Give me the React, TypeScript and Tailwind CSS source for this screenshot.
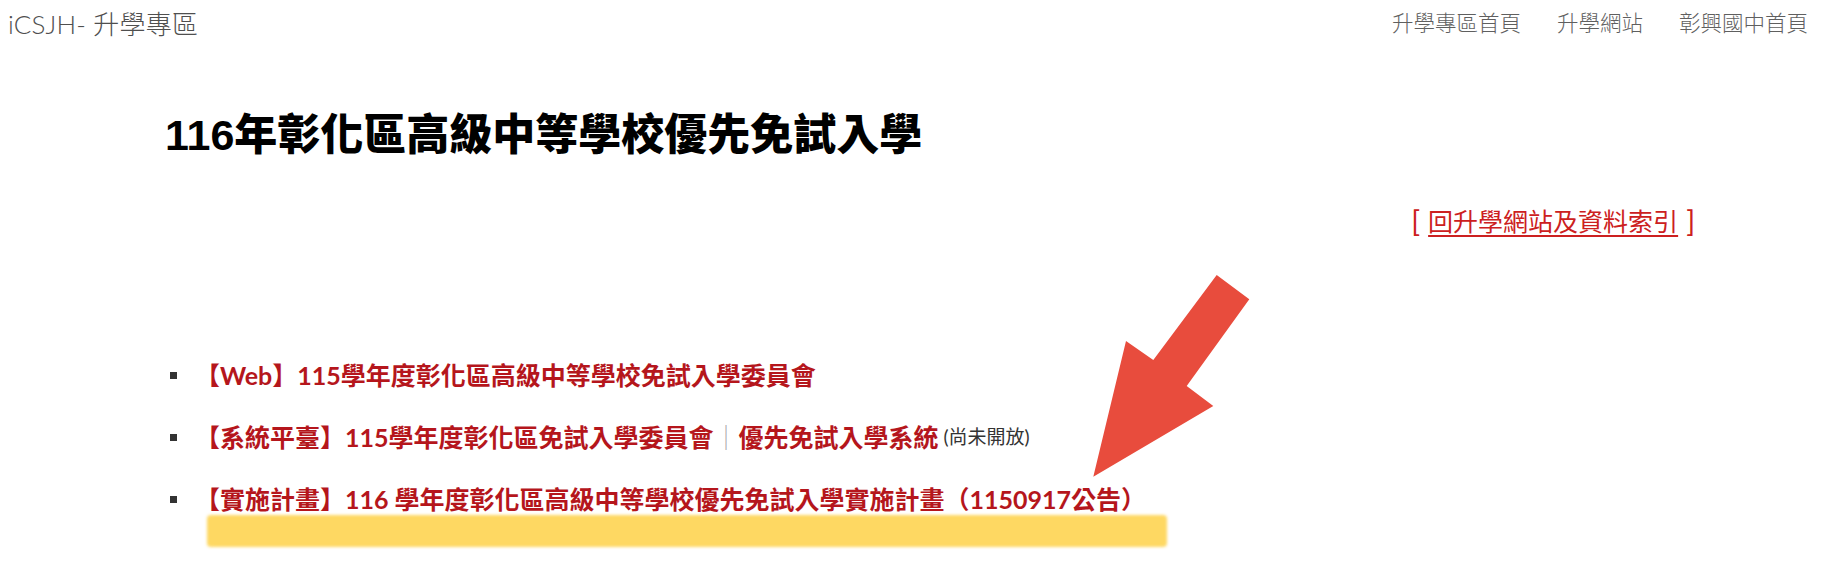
import React from "react";

const cjk = '"Noto Sans CJK TC", sans-serif';

export default function App() {
  return (
    <div
      className="relative w-[1826px] h-[566px] bg-white overflow-hidden"
      style={{ fontFamily: `Lato, ${cjk}` }}
    >
      {/* Header */}
      <header className="h-[48px] flex items-center justify-between pl-[8px] pr-[18px]">
        <div className="text-[26px] font-light text-[#4f4f4f] leading-none tracking-[0.2px]">
          iCSJH- 升學專區
        </div>
        <nav className="flex items-center gap-[36px] text-[21.5px] font-light text-[#5f5f5f] leading-none">
          <span>升學專區首頁</span>
          <span>升學網站</span>
          <span>彰興國中首頁</span>
        </nav>
      </header>

      {/* Main */}
      <main className="pl-[165px]">
        <h1
          className="mt-[61px] text-[43px] leading-[52px] font-black text-black"
          style={{ fontFamily: `"Liberation Sans", ${cjk}` }}
        >
          116年彰化區高級中等學校優先免試入學
        </h1>

        <div className="mt-[42px] flex justify-end pr-[131px]">
          <div className="text-[25px] leading-[36px] text-[#cc2020] flex items-center">
            <span className="text-[29px] font-normal mr-[8px]">[</span>
            <span className="underline underline-offset-[4px] decoration-[1.5px]">回升學網站及資料索引</span>
            <span className="text-[29px] font-normal ml-[8px]">]</span>
          </div>
        </div>

        <ul className="mt-[116px] flex flex-col gap-[22px]">
          <li className="flex items-center h-[40px]">
            <span className="w-[7px] h-[7px] bg-[#333333] ml-[5px] mr-[18px] shrink-0" />
            <span className="text-[25px] font-bold text-[#b5161c] leading-[40px]">
              【Web】115學年度彰化區高級中等學校免試入學委員會
            </span>
          </li>
          <li className="flex items-center h-[40px]">
            <span className="w-[7px] h-[7px] bg-[#333333] ml-[5px] mr-[18px] shrink-0" />
            <span className="text-[25px] leading-[40px] text-[#b5161c]">
              <span className="font-bold">【系統平臺】115學年度彰化區免試入學委員會</span>
              <span className="font-light text-[#a8a8a8]">｜</span>
              <span className="font-bold">優先免試入學系統</span>
            </span>
            <span className="text-[19px] text-[#333333] leading-[40px] ml-[5px]">(尚未開放)</span>
          </li>
          <li className="flex items-center h-[40px]">
            <span className="w-[7px] h-[7px] bg-[#333333] ml-[5px] mr-[18px] shrink-0" />
            <span className="text-[25px] font-bold text-[#b5161c] leading-[40px]">
              【實施計畫】116 學年度彰化區高級中等學校優先免試入學實施計畫（1150917公告）
            </span>
          </li>
        </ul>
      </main>

      {/* Yellow highlight annotation */}
      <div className="absolute left-[207px] top-[515px] w-[960px] h-[32px] rounded-[4px] bg-[#fed862] blur-[1.5px]" />

      {/* Red arrow annotation */}
      <svg
        className="absolute left-[1080px] top-[270px]"
        width="180"
        height="215"
        viewBox="0 0 180 215"
      >
        <polygon
          points="136.7,5 169.3,29.3 106.7,116 133.3,136 13.3,206.7 46,71 73.3,90"
          fill="#e84c3d"
        />
      </svg>
    </div>
  );
}
